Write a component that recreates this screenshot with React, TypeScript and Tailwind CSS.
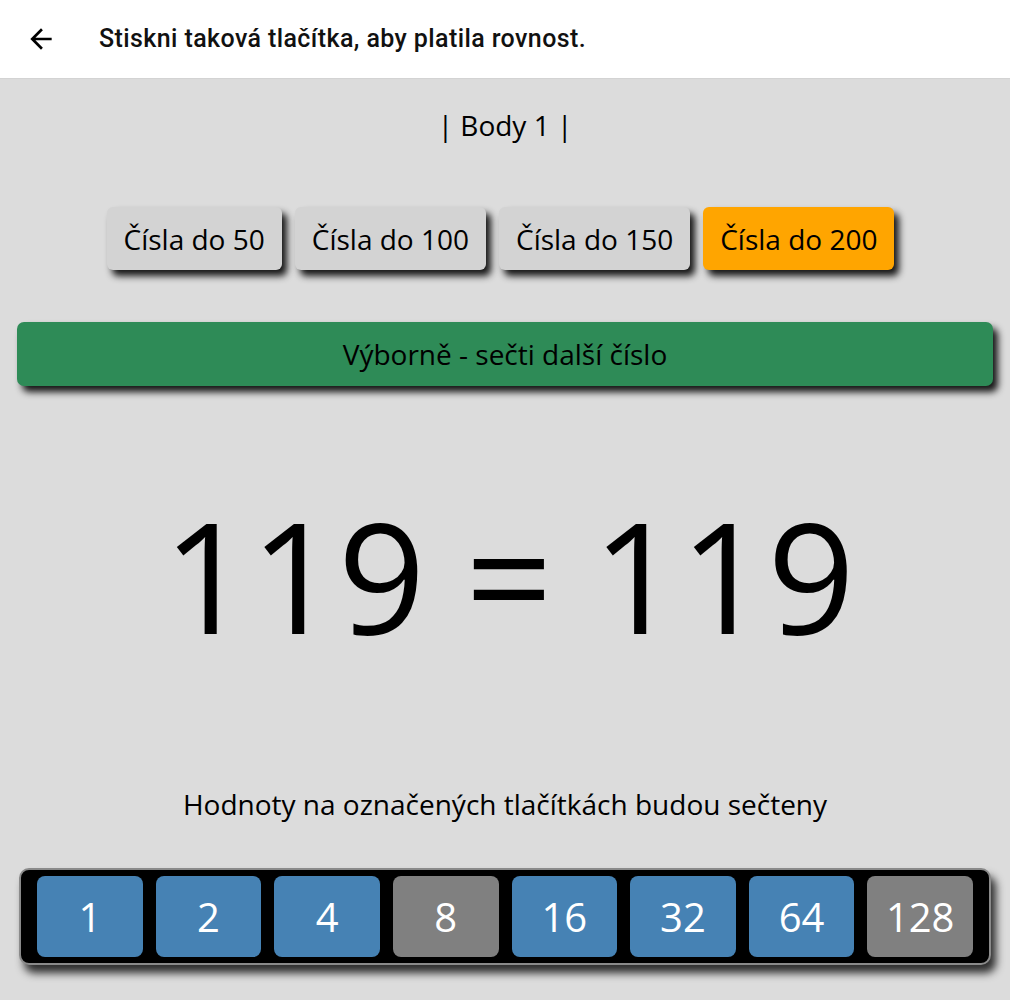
import { useState } from "react";

const RANGES = [50, 100, 150, 200];
const BITS = [1, 2, 4, 8, 16, 32, 64, 128];

const App = () => {
  const [range, setRange] = useState(200);
  const [on, setOn] = useState<number[]>([1, 2, 4, 16, 32, 64]);

  const sum = on.reduce((a, b) => a + b, 0);
  const target = 119;

  const toggle = (b: number) =>
    setOn((prev) => (prev.includes(b) ? prev.filter((x) => x !== b) : [...prev, b]));

  return (
    <div className="min-h-screen bg-[#dcdcdc] flex flex-col font-['Open_Sans',sans-serif] text-black">
      {/* Toolbar */}
      <header className="h-[78px] bg-white flex items-center pl-[25px] shadow-[0_1px_1px_rgba(0,0,0,0.04)]">
        <svg viewBox="0 0 24 24" className="h-8 w-8 shrink-0" fill="currentColor">
          <path d="M20 11H7.83l5.59-5.59L12 4l-8 8 8 8 1.41-1.41L7.83 13H20v-2z" />
        </svg>
        <h1 className="ml-[42px] text-[25px] tracking-[0.4px] font-medium font-['Roboto',sans-serif] text-[#111]">
          Stiskni taková tlačítka, aby platila rovnost.
        </h1>
      </header>

      <main className="flex flex-col items-center">
        <p className="mt-[28px] text-[28px] leading-[38px]">| Body 1 |</p>

        {/* Range buttons */}
        <div className="mt-[63px] flex gap-[13px] pr-[9px]">
          {RANGES.map((r) => (
            <button
              key={r}
              onClick={() => setRange(r)}
              className={`h-[63px] px-[17px] rounded-[6px] text-[28px] leading-none shadow-[5px_6px_7px_rgba(0,0,0,0.9)] ${
                range === r ? "bg-[#ffa500]" : "bg-[#d3d3d3]"
              }`}
            >
              Čísla do {r}
            </button>
          ))}
        </div>

        {/* Status */}
        <div className="mt-[52px] self-stretch mx-[17px] h-[64px] rounded-[7px] bg-[#2e8b57] flex items-center justify-center text-[28px] shadow-[5px_6px_7px_rgba(0,0,0,0.9)]">
          {sum === target ? "Výborně - sečti další číslo" : "Zkus to znovu"}
        </div>

        {/* Equation */}
        <p className="mt-[85px] text-[153px] leading-[208px] pl-[8px]">
          {target} = {sum}
        </p>

        <p className="mt-[106px] text-[28px] leading-[38px]">
          Hodnoty na označených tlačítkách budou sečteny
        </p>

        {/* Bit buttons */}
        <div className="mt-[45px] self-stretch mx-[19px] mb-8 rounded-[10px] border-2 border-[#8a8a8a] bg-black px-[16px] py-[6px] flex gap-[13px] shadow-[5px_8px_8px_rgba(0,0,0,0.8)]">
          {BITS.map((b) => (
            <button
              key={b}
              onClick={() => toggle(b)}
              className={`flex-1 h-[81px] rounded-[8px] text-[40px] text-white flex items-center justify-center ${
                on.includes(b) ? "bg-[#4682b4]" : "bg-[#808080]"
              }`}
            >
              {b}
            </button>
          ))}
        </div>
      </main>
    </div>
  );
};

export default App;
